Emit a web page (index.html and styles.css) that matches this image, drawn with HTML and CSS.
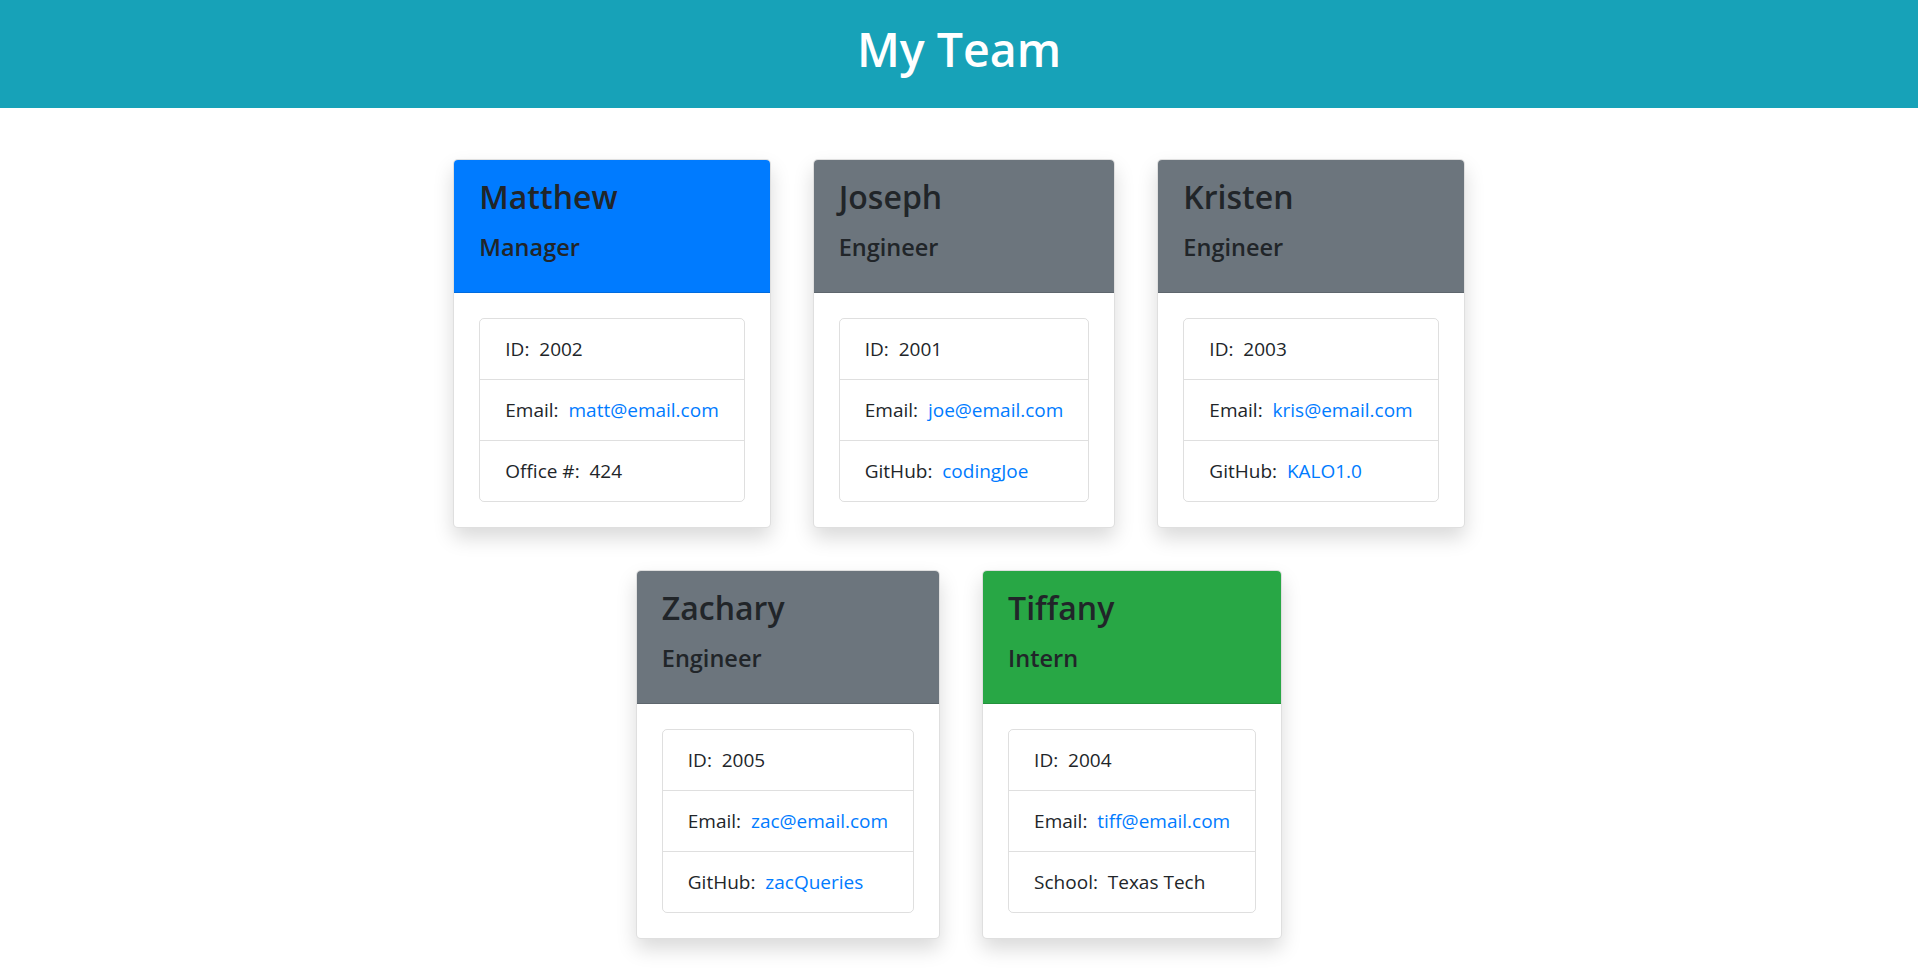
FILE: index.html
```html
<!DOCTYPE html>
<html lang="en">
<head>
<meta charset="utf-8">
<title>My Team</title>
<link rel="stylesheet" href="styles.css">
</head>
<body>
<header class="top">
  <h1 class="top-title">My Team</h1>
</header>
<main class="team">
  <div class="card">
    <div class="card-head manager">
      <h3 class="name">Matthew</h3>
      <h5 class="role">Manager</h5>
    </div>
    <div class="card-body">
      <ul class="info">
        <li class="info-item">ID:&nbsp; 2002</li>
        <li class="info-item">Email:&nbsp; <a class="link" href="#">matt@email.com</a></li>
        <li class="info-item">Office #:&nbsp; 424</li>
      </ul>
    </div>
  </div>
  <div class="card">
    <div class="card-head engineer">
      <h3 class="name">Joseph</h3>
      <h5 class="role">Engineer</h5>
    </div>
    <div class="card-body">
      <ul class="info">
        <li class="info-item">ID:&nbsp; 2001</li>
        <li class="info-item">Email:&nbsp; <a class="link" href="#">joe@email.com</a></li>
        <li class="info-item">GitHub:&nbsp; <a class="link" href="#">codingJoe</a></li>
      </ul>
    </div>
  </div>
  <div class="card">
    <div class="card-head engineer">
      <h3 class="name">Kristen</h3>
      <h5 class="role">Engineer</h5>
    </div>
    <div class="card-body">
      <ul class="info">
        <li class="info-item">ID:&nbsp; 2003</li>
        <li class="info-item">Email:&nbsp; <a class="link" href="#">kris@email.com</a></li>
        <li class="info-item">GitHub:&nbsp; <a class="link" href="#">KALO1.0</a></li>
      </ul>
    </div>
  </div>
  <div class="card">
    <div class="card-head engineer">
      <h3 class="name">Zachary</h3>
      <h5 class="role">Engineer</h5>
    </div>
    <div class="card-body">
      <ul class="info">
        <li class="info-item">ID:&nbsp; 2005</li>
        <li class="info-item">Email:&nbsp; <a class="link" href="#">zac@email.com</a></li>
        <li class="info-item">GitHub:&nbsp; <a class="link" href="#">zacQueries</a></li>
      </ul>
    </div>
  </div>
  <div class="card">
    <div class="card-head intern">
      <h3 class="name">Tiffany</h3>
      <h5 class="role">Intern</h5>
    </div>
    <div class="card-body">
      <ul class="info">
        <li class="info-item">ID:&nbsp; 2004</li>
        <li class="info-item">Email:&nbsp; <a class="link" href="#">tiff@email.com</a></li>
        <li class="info-item">School:&nbsp; Texas Tech</li>
      </ul>
    </div>
  </div>
</main>
</body>
</html>
```

FILE: styles.css
```css
* { box-sizing: border-box; }

body {
  margin: 0;
  font-family: "Open Sans", "Noto Sans", "Liberation Sans", sans-serif;
  font-size: 19px;
  line-height: 1.5;
  color: #212529;
  background: #fff;
}

.top {
  background: #17a2b8;
  height: 108px;
  padding-top: 19px;
  text-align: center;
}

.top-title {
  margin: 0;
  font-size: 46.5px;
  font-weight: 600;
  line-height: 60px;
  color: #fff;
}

.team {
  display: flex;
  flex-wrap: wrap;
  justify-content: center;
  gap: 42px;
  max-width: 1100px;
  margin: 51px auto 0;
  padding-bottom: 40px;
}

.card {
  background: #fff;
  border: 1px solid rgba(0, 0, 0, 0.125);
  border-radius: 5px;
  box-shadow: 0 10px 20px rgba(0, 0, 0, 0.15);
  overflow: hidden;
}

.card-head {
  padding: 16px 25px 30px;
  border-bottom: 1px solid rgba(0, 0, 0, 0.125);
}

.manager { background: #007bff; }
.engineer { background: #6c757d; }
.intern { background: #28a745; }

.name {
  margin: 0 0 14px;
  font-size: 32px;
  line-height: 42px;
  font-weight: 600;
}

.role {
  margin: 0;
  font-size: 23.5px;
  line-height: 30px;
  font-weight: 600;
}

.card-body {
  padding: 25px;
}

.info {
  list-style: none;
  margin: 0;
  padding: 0;
  border: 1px solid rgba(0, 0, 0, 0.125);
  border-radius: 5px;
}

.info-item {
  padding: 15px 25px;
  line-height: 30px;
  white-space: nowrap;
}

.info-item + .info-item {
  border-top: 1px solid rgba(0, 0, 0, 0.125);
}

.link {
  color: #007bff;
  text-decoration: none;
}
```
